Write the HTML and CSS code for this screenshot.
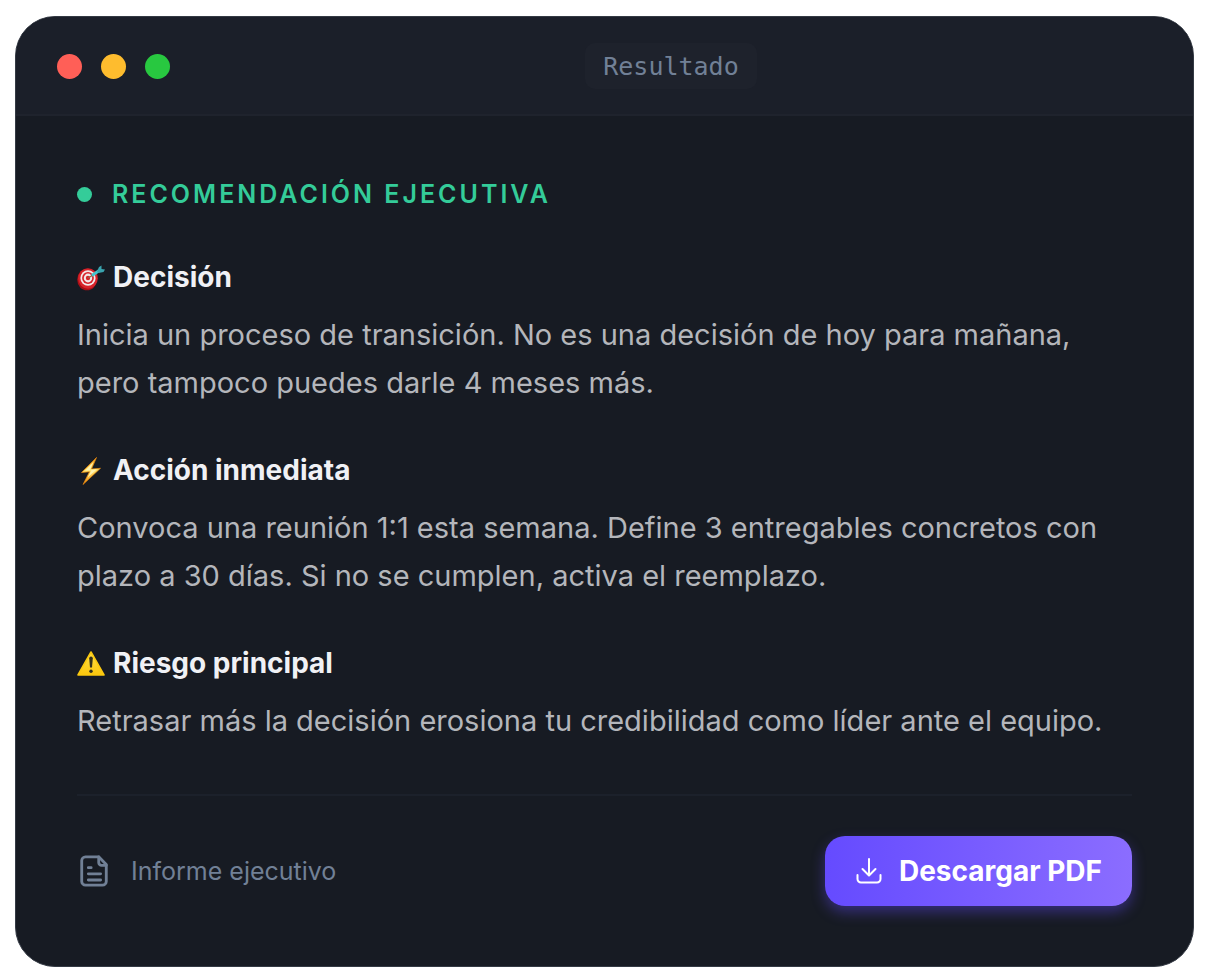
FILE: index.html
```
<!DOCTYPE html>
<html lang="es">
<head>
  <meta charset="UTF-8">
  <meta name="viewport" content="width=device-width, initial-scale=1">
  <title>Resultado</title>
  <link rel="stylesheet" href="styles.css">
</head>
<body>
  <main class="window">
    <header class="window-bar">
      <div class="dots">
        <span class="dot dot-red"></span>
        <span class="dot dot-yellow"></span>
        <span class="dot dot-green"></span>
      </div>
      <div class="window-title"><span class="pill">Resultado</span></div>
    </header>

    <div class="window-body">
      <h1 class="label">Recomendación ejecutiva</h1>

      <section class="block">
        <h2 class="block-title">
          <svg class="emoji" viewBox="0 0 28 28" aria-hidden="true">
            <ellipse cx="10" cy="15.500" rx="9.800" ry="10.800" fill="#a80f16"/>
            <ellipse cx="11" cy="14.500" rx="9.800" ry="10.200" fill="#d8232a"/>
            <ellipse cx="11" cy="14" rx="7.600" ry="7.800" fill="#f3e9ea"/>
            <ellipse cx="11" cy="14" rx="5.900" ry="6.100" fill="#d8232a"/>
            <ellipse cx="11" cy="14" rx="4.200" ry="4.400" fill="#f3e9ea"/>
            <ellipse cx="11" cy="14" rx="2.200" ry="2.300" fill="#d8232a"/>
            <path d="M11 14L16 11" stroke="#8d6a48" stroke-width="1.400"/>
            <path d="M15 11.500L23 6" stroke="#45c5cd" stroke-width="2.800"/>
            <path d="M20 7.500L22 3L24.500 1.500L24.500 5L28 5.500L26.500 8L21.500 9Z" fill="#3aa3ae"/>
          </svg>
          Decisión
        </h2>
        <p class="block-text">Inicia un proceso de transición. No es una decisión de hoy para mañana, pero tampoco puedes darle 4 meses más.</p>
      </section>

      <section class="block">
        <h2 class="block-title">
          <svg class="emoji" viewBox="0 0 28 28" aria-hidden="true">
            <defs>
              <linearGradient id="bolt" x1="0" y1="0" x2="0" y2="1">
                <stop offset="0" stop-color="#f59a12"/>
                <stop offset="0.5" stop-color="#ffe26a"/>
                <stop offset="1" stop-color="#f08a0c"/>
              </linearGradient>
            </defs>
            <path d="M19.500 0.500L4.500 15.500L12.500 14.800L6 27.500L23.500 11.300L14.500 12Z" fill="url(#bolt)" stroke="#e8880f" stroke-width="0.700" stroke-linejoin="round"/>
            <path d="M16.500 5L8 13.800L14.500 13.200L10.500 20.500L20 12.300L13 12.800Z" fill="#fff3b0"/>
          </svg>
          Acción inmediata
        </h2>
        <p class="block-text">Convoca una reunión 1:1 esta semana. Define 3 entregables concretos con plazo a 30 días. Si no se cumplen, activa el reemplazo.</p>
      </section>

      <section class="block">
        <h2 class="block-title">
          <svg class="emoji" viewBox="0 0 28 28" aria-hidden="true">
            <defs>
              <linearGradient id="warn" x1="0" y1="0" x2="0" y2="1">
                <stop offset="0" stop-color="#ffe04a"/>
                <stop offset="1" stop-color="#fbc60c"/>
              </linearGradient>
            </defs>
            <path d="M14 2L27 25H1Z" fill="url(#warn)" stroke="#fbc90f" stroke-width="1.600" stroke-linejoin="round"/>
            <path d="M12.200 8.300a1.800 1.800 0 0 1 3.600 0L15 17.500h-2Z" fill="#33301c"/>
            <circle cx="14" cy="21.300" r="1.700" fill="#33301c"/>
          </svg>
          Riesgo principal
        </h2>
        <p class="block-text">Retrasar más la decisión erosiona tu credibilidad como líder ante el equipo.</p>
      </section>

      <footer class="window-footer">
        <div class="report">
          <svg class="report-icon" viewBox="-1 0 36 36" aria-hidden="true">
            <path d="M22 3H8a4 4 0 0 0-4 4v22a4 4 0 0 0 4 4h18a4 4 0 0 0 4-4V11Z"/>
            <path d="M22 3v6a3 3 0 0 0 3 3h5M11 14.500h3M11 21h13M11 27.500h13"/>
          </svg>
          <span>Informe ejecutivo</span>
        </div>
        <button type="button" class="download">
          <svg class="download-icon" viewBox="0 0 28 28" aria-hidden="true">
            <path d="M14 2v16M7.500 12l6.500 6.500L20.500 12M2.500 18v4a3.500 3.500 0 0 0 3.500 3.500h16a3.500 3.500 0 0 0 3.500-3.500v-4"/>
          </svg>
          Descargar PDF
        </button>
      </footer>
    </div>
  </main>
</body>
</html>
```
FILE: styles.css
```
* {
  box-sizing: border-box;
}

body {
  margin: 0;
  padding: 16px 16px 14px 15px;
  background: #fff;
  font-family: Inter, "Liberation Sans", sans-serif;
}

h1,
h2,
p {
  margin: 0;
}

.window {
  overflow: hidden;
  border: 1px solid #343a44;
  border-radius: 40px;
  background: #171b23;
}

/* title bar */
.window-bar {
  display: flex;
  align-items: center;
  gap: 20px;
  padding: 26px 41px 25px;
  border-bottom: 2px solid #1f232d;
  background: #1b1f29;
}

.dots {
  display: flex;
  gap: 19px;
}

.dot {
  width: 25px;
  height: 25px;
  border-radius: 50%;
}

.dot-red {
  background: #ff5f57;
}

.dot-yellow {
  background: #febc2e;
}

.dot-green {
  background: #28c840;
}

.window-title {
  flex: 1;
  display: flex;
  justify-content: center;
}

.pill {
  padding: 9px 18px 7px;
  border-radius: 10px;
  background: #1e222c;
  color: #718096;
  font-family: "DejaVu Sans Mono", monospace;
  font-size: 25px;
  line-height: 30px;
}

/* content */
.window-body {
  padding: 60px 61px;
}

.label {
  display: flex;
  align-items: center;
  gap: 20px;
  margin-bottom: 48px;
  color: #34cc99;
  font-size: 25px;
  font-weight: 600;
  line-height: 37px;
  letter-spacing: 3px;
  text-transform: uppercase;
}

.label::before {
  content: "";
  width: 15px;
  height: 15px;
  border-radius: 50%;
  background: #34cc99;
}

.block {
  margin-bottom: 47px;
}

.block-title {
  display: flex;
  align-items: center;
  gap: 8px;
  margin-bottom: 17px;
  color: #f0f1f5;
  font-size: 28px;
  font-weight: 700;
  line-height: 33px;
}

.emoji {
  width: 28px;
  height: 28px;
}

.block-text {
  color: #b4b6bb;
  font-size: 29px;
  line-height: 48px;
}

/* footer */
.window-footer {
  display: flex;
  align-items: center;
  justify-content: space-between;
  margin-top: 49px;
  padding-top: 40px;
  border-top: 2px solid #1c212b;
}

.report {
  display: flex;
  align-items: center;
  gap: 20px;
  color: #718096;
  font-size: 25px;
}

.report-icon {
  width: 34px;
  height: 34px;
  fill: none;
  stroke: currentColor;
  stroke-width: 3;
  stroke-linecap: round;
  stroke-linejoin: round;
}

.download {
  display: flex;
  align-items: center;
  gap: 16px;
  height: 70px;
  padding: 0 30px;
  border: none;
  border-radius: 20px;
  background: linear-gradient(90deg, #654bff, #8b6dff);
  box-shadow: 0 6px 14px rgba(101, 75, 255, 0.4);
  color: #fff;
  font-family: inherit;
  font-size: 28px;
  font-weight: 700;
  cursor: pointer;
}

.download-icon {
  width: 28px;
  height: 28px;
  fill: none;
  stroke: currentColor;
  stroke-width: 2;
  stroke-linecap: round;
  stroke-linejoin: round;
}
```
